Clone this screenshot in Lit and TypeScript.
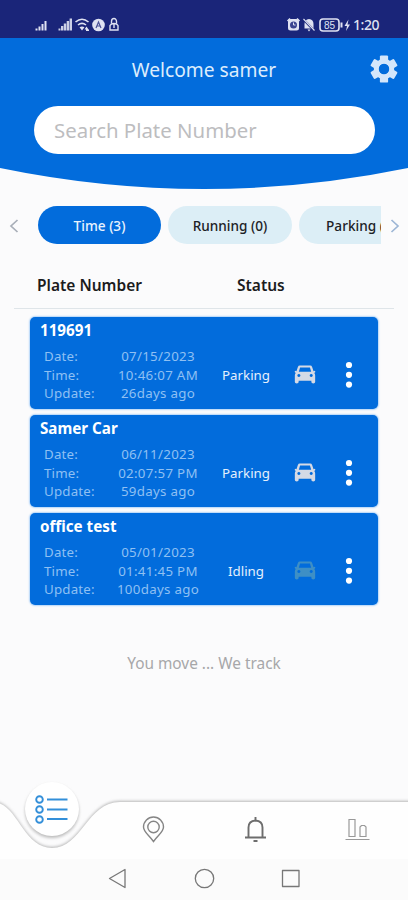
import { LitElement, html, svg, css } from "lit";
import { customElement } from "lit/decorators.js";
import { classMap } from "lit/directives/class-map.js";

interface Vehicle {
  plate: string;
  date: string;
  time: string;
  update: string;
  status: string;
  idle?: boolean;
}

const vehicles: Vehicle[] = [
  { plate: "119691", date: "07/15/2023", time: "10:46:07 AM", update: "26days ago", status: "Parking" },
  { plate: "Samer Car", date: "06/11/2023", time: "02:07:57 PM", update: "59days ago", status: "Parking" },
  { plate: "office test", date: "05/01/2023", time: "01:41:45 PM", update: "100days ago", status: "Idling", idle: true },
];

const tooth = (angle: number) =>
  svg`<rect x="9.9" y="0.4" width="8.2" height="7" rx="1.2" transform="rotate(${angle} 14 14)" />`;

@customElement("status-bar")
class StatusBar extends LitElement {
  static styles = css`
    :host { display: block; height: 38px; background: #1a2579; color: #dfe2f2; }
    svg { display: block; }
    .bar { display: flex; justify-content: space-between; padding: 15px 28px 0 34px; height: 23px; box-sizing: border-box; }
    .right { display: flex; }
    .time { font: 500 14px/20px "Noto Sans", sans-serif; letter-spacing: -0.45px; margin-left: 3px; width: 27px; white-space: nowrap; }
    .level { font: 400 10px "Liberation Sans", sans-serif; }
  `;
  render() {
    return html`<div class="bar">
      <svg width="88" height="20" viewBox="34 15 88 20" fill="currentColor">
        <path d="M35.5 28.500h2v2h-2zM38.500 26.500h2v4h-2zM41.500 24h2v6.500h-2zM44.500 21h2v9.500h-2z" />
        <path d="M58.500 28.500h2v2h-2zM61 26h2.300v4.500H61zM63.800 23.500h2.400v7h-2.400zM66.700 21h2.400v9.500h-2.400zM69.600 18.500h2.400v12h-2.400z" opacity=".9" />
        <g fill="none" stroke="currentColor" stroke-width="1.6">
          <path d="M75.500 22q6.500-5.500 13 0M78 25q4-3.300 8 0" />
        </g>
        <path d="M79.500 27.300q2.500-1.600 5 0L82 30.500zM84.500 29.500l2-3 2 3zM86 29.500h3V31h-3z" />
        <circle cx="98.500" cy="25" r="6.300" />
        <path d="M96 28 98.500 22 101 28M97 26h3" fill="none" stroke="#4a5296" stroke-width="1.200" />
        <g fill="none" stroke="currentColor" stroke-width="1.400">
          <path d="M111.500 23.500v-2a2.500 3 0 0 1 5 0v2" />
          <path d="M110 30v-4.500q1-2 4-2t4 2V30zM114 24v4" />
        </g>
      </svg>
      <div class="right">
        <svg width="64" height="20" viewBox="286 15 64 20" fill="currentColor">
          <rect x="288" y="19" width="11" height="11.500" rx="2.500" />
          <path d="M287.500 21l2.500-2.500M299.500 21 297 18.500" stroke="currentColor" stroke-width="1.500" />
          <circle cx="293.500" cy="25" r="3.500" fill="#3a4390" />
          <path d="M293.500 22.500v2.500h2" stroke="currentColor" fill="none" />
          <path d="M304.500 28.500V24q0-4.500 4.500-5 4.500.5 4.500 5v4.500zM307.500 29.500h3l-1.500 2z" />
          <path d="M303.500 19.500 314.500 31" stroke="#1a2579" stroke-width="2.200" />
          <path d="M303.500 19 314.500 30.500" stroke="currentColor" stroke-width="1.100" />
          <rect x="320" y="19" width="19" height="12" rx="3" fill="none" stroke="currentColor" stroke-width="1.600" />
          <rect x="340.500" y="22.500" width="2" height="5" />
          <text class="level" x="324" y="28.700">85</text>
          <path d="M348.500 19.500l-4 6.500h2.500l-1 5 4-6.500h-2.500z" />
        </svg>
        <span class="time">1:20</span>
      </div>
    </div>`;
  }
}

@customElement("vehicle-card")
class VehicleCard extends LitElement {
  static properties = { vehicle: { attribute: false } };
  declare vehicle: Vehicle;
  static styles = css`
    :host { display: block; box-sizing: border-box; height: 92px; border-radius: 5px; background: #026cdc; box-shadow: 0 0 1.5px 1px #b4d5f8; color: #fff; padding: 3px 0 0 10px; font-family: "Noto Sans", sans-serif; }
    .plate { font-size: 15.2px; line-height: 20px; font-weight: 700; white-space: nowrap; }
    .row { display: grid; grid-template-columns: 60px 108px 68px 52px 1fr; padding: 7px 0 0 4px; align-items: center; }
    .labels, .values { font-size: 13.300px; line-height: 18.500px; color: #8fc0f3; white-space: nowrap; }
    .labels { letter-spacing: 0.2px; }
    .values { text-align: center; letter-spacing: 0.3px; }
    .status { font-size: 13.300px; text-align: center; line-height: 20px; color: #e4f0fd; font-weight: 400; }
    .car { fill: #d5dae5; margin-left: 14px; }
    .car.idle { fill: #3e8fc5; }
    svg { display: block; }
    .dots { fill: #fff; margin-left: 13px; }
  `;
  render() {
    const v = this.vehicle;
    return html`
      <div class="plate">${v.plate}</div>
      <div class="row">
        <div class="labels"><div>Date:</div><div>Time:</div><div>Update:</div></div>
        <div class="values"><div>${v.date}</div><div>${v.time}</div><div>${v.update}</div></div>
        <div class="status">${v.status}</div>
        <svg class=${classMap({ car: true, idle: !!v.idle })} width="22" height="19" viewBox="0 0 23 20">
          <path fill-rule="evenodd" d="M6 .5h11q1.500 0 2 1.500l1.500 4.500 1.200-.5q1 .5.5 1.500l-1 1q1 1 1 2.500v7q0 1.500-2 1.500t-2-1.500v-1.500H4.800V18q0 1.500-2 1.500t-2-1.500v-7q0-1.500 1-2.500l-1-1q-.5-1 .5-1.500l1.200.5L4 2Q4.500.5 6 .5zM6.300 2.500 5 7h13l-1.300-4.500zM5 9.500a1.600 1.600 0 1 0 .1 0zM18 9.500a1.600 1.600 0 1 0 .1 0z" />
        </svg>
        <svg class="dots" width="8" height="28" viewBox="0 0 8 28">
          <circle cx="4" cy="4" r="3.100" /><circle cx="4" cy="13.800" r="3.100" /><circle cx="4" cy="23.600" r="3.100" />
        </svg>
      </div>`;
  }
}

@customElement("app-root")
class AppRoot extends LitElement {
  static styles = css`
    :host { display: flex; flex-direction: column; width: 408px; height: 900px; overflow: hidden; background: #fbfbfc; font-family: "Noto Sans", sans-serif; }
    svg { display: block; }
    .hero { height: 152px; display: grid; }
    .hero > * { grid-area: 1 / 1; }
    .content { display: flex; flex-direction: column; align-items: center; }
    .top { display: grid; grid-template-columns: 44px 1fr 44px; width: 408px; height: 62px; align-items: center; }
    .title { text-align: center; font-size: 19.200px; color: #dcecfd; white-space: nowrap; }
    .gear { margin-left: 6px; }
    .search { width: 341px; height: 48px; box-sizing: border-box; border-radius: 24px; background: #fff; margin-top: 6px; padding-left: 20.500px; color: #bdbdbf; font-size: 20.400px; line-height: 49px; }
    .tabs { display: flex; height: 38px; margin-top: 16px; align-items: center; }
    .prev { margin: 2px 0 0 9px; }
    .next { margin-top: 2px; margin-left: 9px; }
    .strip { display: flex; gap: 7px; width: 343px; margin-left: 19px; overflow: hidden; }
    .tab { flex: none; width: 124px; height: 38px; line-height: 39px; border-radius: 19px; background: #dceef6; color: #1d2226; text-align: center; font-size: 13.600px; font-weight: 500; }
    .tab.on { background: #026cdc; color: #e9f3fe; width: 123px; }
    .heads { display: flex; margin: 27px 14px 0; padding-left: 23px; height: 37px; border-bottom: 1px solid #dfe5e9; font-size: 15.500px; line-height: 28px; font-weight: 600; color: #1b1b1d; }
    .heads span:first-child { width: 200px; }
    .list { display: flex; flex-direction: column; gap: 6px; margin: 8px 30px 0 30px; }
    .motto { text-align: center; font-size: 15.400px; color: #a7a7a9; margin-top: 48px; line-height: 22px; }
    .nav { margin-top: auto; height: 125px; }
  `;
  render() {
    return html`
      <status-bar></status-bar>
      <div class="hero">
        <svg width="408" height="152"><path d="M0 0H408V130Q306 151 204 151T0 130z" fill="#026cdc" /></svg>
        <div class="content">
          <div class="top">
            <span></span>
            <span class="title">Welcome samer</span>
            <svg class="gear" width="28" height="28" viewBox="0 0 28 28" fill="#d3e6fb">
              ${[0, 60, 120, 180, 240, 300].map(tooth)}
              <circle cx="14" cy="14" r="7.700" fill="none" stroke="#d3e6fb" stroke-width="5" />
              <circle cx="14" cy="14" r="5" fill="#026cdc" />
            </svg>
          </div>
          <div class="search">Search Plate Number</div>
        </div>
      </div>
      <div class="tabs">
        <svg class="prev" width="10" height="16" fill="none" stroke="#a8aeb8" stroke-width="1.700"><path d="M8.500 2 2 8l6.500 6" /></svg>
        <div class="strip">
          <div class="tab on">Time (3)</div>
          <div class="tab">Running (0)</div>
          <div class="tab">Parking (3)</div>
        </div>
        <svg class="next" width="10" height="16" fill="none" stroke="#9db6d5" stroke-width="1.700"><path d="M1.500 2 8 8l-6.500 6" /></svg>
      </div>
      <div class="heads"><span>Plate Number</span><span>Status</span></div>
      <div class="list">${vehicles.map((v) => html`<vehicle-card .vehicle=${v}></vehicle-card>`)}</div>
      <div class="motto">You move ... We track</div>
      <svg class="nav" width="408" height="125" viewBox="0 775 408 125" fill="none">
        <defs>
          <filter id="soft" x="-10%" y="-20%" width="120%" height="140%"><feGaussianBlur stdDeviation="1.500" /></filter>
        </defs>
        <path d="M-8 801C18 801 22 847 52 847S87 801 120 801H412V910H-8z" fill="#b5b5b5" filter="url(#soft)" />
        <path d="M-8 802C18 802 22 848 52 848S87 802 120 802H412V910H-8z" fill="#fefefe" />
        <circle cx="52" cy="811" r="27" fill="#bbb" filter="url(#soft)" />
        <circle cx="52" cy="809" r="27" fill="#fff" />
        <rect y="859" width="408" height="41" fill="#fbfbfb" />
        <g stroke="#338fd9" stroke-width="1.900">
          <circle cx="39.500" cy="799.500" r="3.300" /><circle cx="39.500" cy="809.500" r="3.300" /><circle cx="39.500" cy="819.500" r="3.300" />
          <path d="M47 799.500h20.500M47 809.500h20.500M47 819h20.500" />
        </g>
        <g stroke="#858585" stroke-width="1.400">
          <path d="M153.500 841.500C149 835 143.500 832 143.500 827a10 10 0 0 1 20 0C163.500 832 158 835 153.500 841.500z" />
          <circle cx="153.500" cy="827" r="5.700" />
          <path d="M349 819.500h6v17h-6zM360 836.500V827l1.500-1.500h3L366 827v9.500zM345.500 839.500h24" stroke="#999" stroke-width="1.200" />
        </g>
        <path d="M245 837.500h21M248.500 837v-9.500q0-6.500 7-7 7 .5 7 7v9.500M255.500 817v3M253.500 841h4" stroke="#6d6d6d" stroke-width="1.900" />
        <g stroke="#777" stroke-width="1.300" stroke-linejoin="round">
          <path d="M109.500 878.500 125 869.500V887.500z" />
          <circle cx="204.500" cy="878.500" r="9.200" />
          <rect x="282.500" y="870.500" width="16.500" height="16" />
        </g>
      </svg>`;
  }
}
